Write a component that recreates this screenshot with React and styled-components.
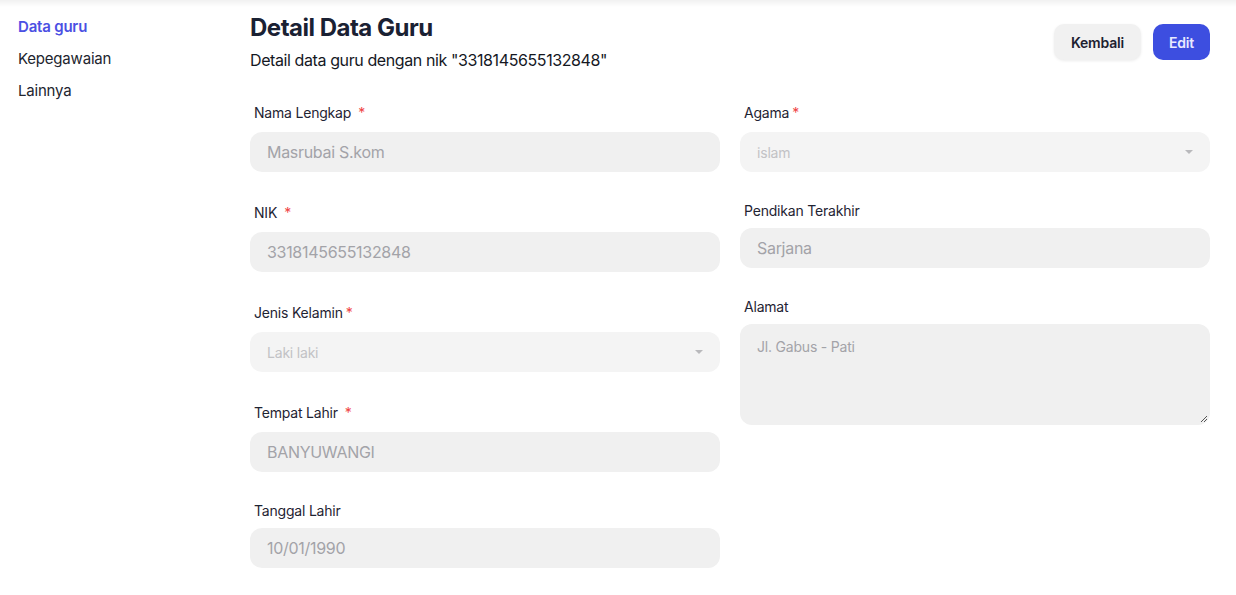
import React from "react";
import styled, { createGlobalStyle } from "styled-components";

const GlobalStyle = createGlobalStyle`
    body {
        margin: 0;
        background: linear-gradient(#f1f1f1 0px, #ffffff 7px) no-repeat, #ffffff;
        font-family: Inter, "Noto Sans", sans-serif;
        letter-spacing: -0.2px;
        color: #1b2233;
    }
`;

const Page = styled.div`
    display: flex;
    width: 1236px;
    min-height: 595px;
`;

const Sidebar = styled.nav`
    display: flex;
    flex-direction: column;
    width: 250px;
    padding: 11px 0 0 18px;
    box-sizing: border-box;
`;

const NavItem = styled.a`
    font-size: 15px;
    line-height: 32px;
    color: ${(p) => (p.active ? "#4b4fe3" : "#22252e")};
    font-weight: ${(p) => (p.active ? 600 : 400)};
    text-decoration: none;
    cursor: pointer;
`;

const Main = styled.main`
    width: 960px;
    padding-top: 12px;
`;

const Header = styled.div`
    display: flex;
    justify-content: space-between;
    align-items: flex-start;
`;

const TitleBlock = styled.div`
    display: flex;
    flex-direction: column;
`;

const Title = styled.h1`
    margin: 0;
    font-size: 24px;
    line-height: 32px;
    font-weight: 700;
    letter-spacing: -0.5px;
    color: #1a2133;
`;

const Subtitle = styled.p`
    margin: 4px 0 0;
    font-size: 16px;
    line-height: 24px;
    letter-spacing: -0.4px;
    color: #15181f;
`;

const Actions = styled.div`
    display: flex;
    gap: 12px;
    margin-top: 12px;
`;

const Button = styled.button`
    height: 36px;
    padding: 0 ${(p) => (p.primary ? "16px" : "17px")};
    border: none;
    border-radius: 10px;
    font-family: inherit;
    font-size: 14px;
    font-weight: 600;
    letter-spacing: -0.2px;
    cursor: pointer;
    background: ${(p) => (p.primary ? "#3d4ee0" : "#f1f1f1")};
    color: ${(p) => (p.primary ? "#e8eaff" : "#1d2130")};
    box-shadow: ${(p) => (p.primary ? "none" : "0 1px 3px rgba(0,0,0,0.08)")};
`;

const FormGrid = styled.div`
    display: grid;
    grid-template-columns: 470px 470px;
    column-gap: 20px;
    margin-top: 28px;
`;

const Column = styled.div`
    display: flex;
    flex-direction: column;
`;

const Field = styled.div`
    display: flex;
    flex-direction: column;
    margin-bottom: 28px;
`;

const Label = styled.label`
    display: flex;
    align-items: center;
    height: ${(p) => (p.required ? "24px" : "20px")};
    margin-bottom: 8px;
    padding-left: 4px;
    font-size: 14px;
    color: #1f2433;
`;

const Star = styled.span`
    color: #ef4444;
    margin-left: ${(p) => (p.wide ? "7px" : "3px")};
`;

const Input = styled.div`
    display: flex;
    align-items: center;
    height: 40px;
    padding: 0 17px;
    border-radius: 12px;
    background: #f0f0f0;
    font-size: 16px;
    letter-spacing: -0.3px;
    color: #a3a3a8;
`;

const Select = styled.div`
    display: flex;
    align-items: center;
    justify-content: space-between;
    height: 40px;
    padding: 0 17px;
    border-radius: 12px;
    background: #f4f4f4;
    font-size: 14px;
    color: #c2c2c5;
`;

const Caret = styled.span`
    width: 0;
    height: 0;
    border-left: 4px solid transparent;
    border-right: 4px solid transparent;
    border-top: 4px solid #b9b9bc;
`;

const TextArea = styled.div`
    position: relative;
    height: 101px;
    padding: 13px 17px;
    box-sizing: border-box;
    border-radius: 12px;
    background: #f0f0f0;
    font-size: 14px;
    line-height: 20px;
    color: #a3a3a8;
`;

const ResizeGrip = styled.svg`
    position: absolute;
    right: 2px;
    bottom: 2px;
`;

function FormField({ label, required, wide, children }) {
    return (
        <Field>
            <Label required={required}>
                {label}
                {required && <Star wide={wide}>*</Star>}
            </Label>
            {children}
        </Field>
    );
}

export default function App() {
    return (
        <>
            <GlobalStyle />
            <Page>
                <Sidebar>
                    <NavItem active>Data guru</NavItem>
                    <NavItem>Kepegawaian</NavItem>
                    <NavItem>Lainnya</NavItem>
                </Sidebar>
                <Main>
                    <Header>
                        <TitleBlock>
                            <Title>Detail Data Guru</Title>
                            <Subtitle>Detail data guru dengan nik "3318145655132848"</Subtitle>
                        </TitleBlock>
                        <Actions>
                            <Button>Kembali</Button>
                            <Button primary>Edit</Button>
                        </Actions>
                    </Header>
                    <FormGrid>
                        <Column>
                            <FormField label="Nama Lengkap" required wide>
                                <Input>Masrubai S.kom</Input>
                            </FormField>
                            <FormField label="NIK" required wide>
                                <Input>3318145655132848</Input>
                            </FormField>
                            <FormField label="Jenis Kelamin" required>
                                <Select>
                                    Laki laki
                                    <Caret />
                                </Select>
                            </FormField>
                            <FormField label="Tempat Lahir" required wide>
                                <Input>BANYUWANGI</Input>
                            </FormField>
                            <FormField label="Tanggal Lahir">
                                <Input>10/01/1990</Input>
                            </FormField>
                        </Column>
                        <Column>
                            <FormField label="Agama" required>
                                <Select>
                                    islam
                                    <Caret />
                                </Select>
                            </FormField>
                            <FormField label="Pendikan Terakhir">
                                <Input>Sarjana</Input>
                            </FormField>
                            <FormField label="Alamat">
                                <TextArea>
                                    Jl. Gabus - Pati
                                    <ResizeGrip width="8" height="8" viewBox="0 0 8 8">
                                        <path d="M7 1L1 7M7 4L4 7" stroke="#555" strokeWidth="1" />
                                    </ResizeGrip>
                                </TextArea>
                            </FormField>
                        </Column>
                    </FormGrid>
                </Main>
            </Page>
        </>
    );
}
